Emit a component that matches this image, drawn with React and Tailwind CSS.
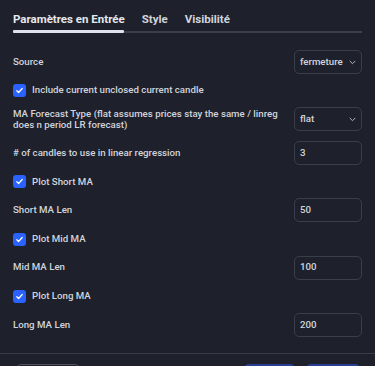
import React from "react";

const Check = () => (
  <span className="flex h-[13px] w-[13px] shrink-0 items-center justify-center rounded-[3px] bg-[#2962ff]">
    <svg width="9" height="9" viewBox="0 0 10 10" fill="none">
      <path d="M2 5.2l2 2 4-4.4" stroke="#ffffff" strokeWidth="1.4" strokeLinecap="round" strokeLinejoin="round" />
    </svg>
  </span>
);

const Chevron = () => (
  <svg width="7" height="5" viewBox="0 0 7 5" fill="none">
    <path d="M1 1.2l2.5 2.5 2.5-2.5" stroke="#b2b5be" strokeWidth="1" strokeLinecap="round" strokeLinejoin="round" />
  </svg>
);

const Box = ({ children, select }) => (
  <div className="flex h-[24px] w-[68px] shrink-0 items-center justify-between rounded-[5px] border border-[#3a3e49] pl-[5px] pr-[5px] text-[9.7px] text-[#d1d4dc]">
    <span>{children}</span>
    {select && <Chevron />}
  </div>
);

const FieldRow = ({ label, value, select, h = "h-[28.6px]" }) => (
  <div className={`flex ${h} items-center justify-between`}>
    <span>{label}</span>
    <Box select={select}>{value}</Box>
  </div>
);

const CheckRow = ({ label, h = "h-[28.6px]" }) => (
  <div className={`flex ${h} items-center gap-[6px]`}>
    <Check />
    <span>{label}</span>
  </div>
);

export default function App() {
  return (
    <div
      className="h-[366px] w-[375px] overflow-hidden bg-[#1e212b] text-[9.7px] font-medium text-[#d1d4dc]"
      style={{ fontFamily: "Roboto, 'Liberation Sans', sans-serif" }}
    >
      <div className="relative h-[34px] px-[13px]">
        <div className="flex gap-[17px] pt-[11px] text-[11.5px] font-bold leading-[16px]">
          <span className="text-[#e6e8ee]">Paramètres en Entrée</span>
          <span>Style</span>
          <span>Visibilité</span>
        </div>
        <div className="absolute left-[13px] right-[13px] top-[31px] h-[1.5px] bg-[#3b3f4a]" />
        <div className="absolute left-[13px] top-[30px] h-[3px] w-[111px] rounded-[1px] bg-[#dfe2ea]" />
      </div>
      <div className="flex flex-col px-[13px] pt-[14px]">
        <FieldRow label="Source" value="fermeture" select h="h-[28px]" />
        <CheckRow label="Include current unclosed current candle" h="h-[28px]" />
        <div className="flex h-[30px] items-center justify-between">
          <span className="w-[275px] leading-[11px]">
            MA Forecast Type (flat assumes prices stay the same / linreg does n period LR forecast)
          </span>
          <Box select>flat</Box>
        </div>
        <div className="mt-[5px]">
          <FieldRow label="# of candles to use in linear regression" value="3" />
        </div>
        <CheckRow label="Plot Short MA" />
        <FieldRow label="Short MA Len" value="50" />
        <CheckRow label="Plot Mid MA" />
        <FieldRow label="Mid MA Len" value="100" />
        <CheckRow label="Plot Long MA" />
        <FieldRow label="Long MA Len" value="200" />
      </div>
      <div className="mt-[13.5px] h-px bg-[#383c47]" />
      <div className="flex px-[16px] pt-[10.5px]">
        <div className="h-[20px] w-[64px] rounded-[5px] border border-[#50535e]" />
        <div className="ml-auto h-[20px] w-[51px] rounded-[5px] bg-[#2a3f8f]" />
        <div className="ml-[11px] mr-[-1px] h-[20px] w-[54px] rounded-[5px] bg-[#2a3f8f]" />
      </div>
    </div>
  );
}
